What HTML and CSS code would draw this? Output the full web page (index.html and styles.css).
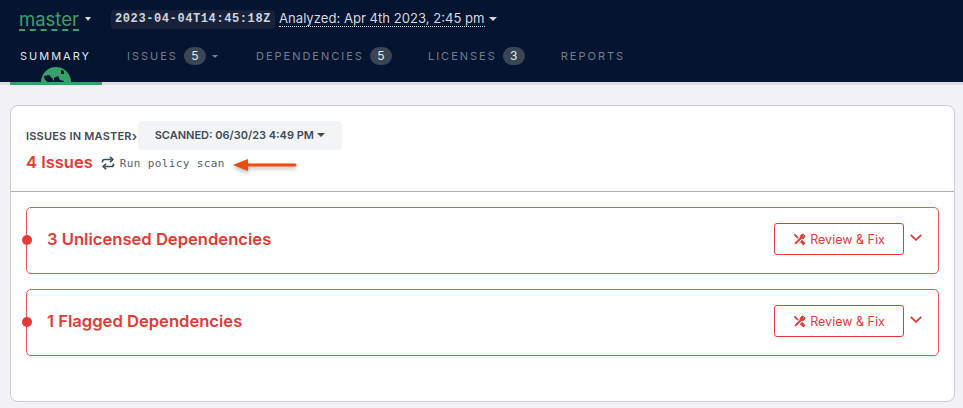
FILE: index.html
```html
<!DOCTYPE html>
<html lang="en">
<head>
    <meta charset="UTF-8">
    <title>Issues</title>
    <link rel="stylesheet" href="styles.css">
</head>
<body>
    <div class="topbar">
        <div class="topbar-row">
            <span class="branch">master</span>
            <span class="caret branch-caret"></span>
            <span class="revision">2023-04-04T14:45:18Z</span>
            <span class="analyzed">Analyzed: Apr 4th 2023, 2:45 pm</span>
            <span class="caret"></span>
        </div>
        <div class="tabs">
            <div class="tab active">
                SUMMARY
                <svg class="globe" width="30" height="30" viewBox="0 0 30 30">
                    <circle cx="15" cy="15" r="15" fill="#38a169"/>
                    <path d="M3 9l5-1 3 3 2 3-1 2-4 0-4-3zM13 11l4-2 2 4 4 1-1 3-6 1-3-3zM20 3l3 1 0 3-3 0z" fill="#041431"/>
                </svg>
            </div>
            <div class="tab">ISSUES <span class="count">5</span><span class="caret dim"></span></div>
            <div class="tab">DEPENDENCIES <span class="count">5</span></div>
            <div class="tab">LICENSES <span class="count">3</span></div>
            <div class="tab">REPORTS</div>
        </div>
    </div>

    <div class="main">
        <div class="card">
            <div class="card-head">
                <div class="crumbs">
                    <span class="crumb">ISSUES IN MASTER</span>
                    <span class="crumb-sep">&#8250;</span>
                    <span class="scan-select">SCANNED: 06/30/23 4:49 PM <span class="caret dark"></span></span>
                </div>
                <div class="summary-row">
                    <span class="issue-total">4 Issues</span>
                    <svg class="refresh" width="14" height="14" viewBox="0 0 14 14" fill="none" stroke="#3f4a5a" stroke-width="1.700">
                        <path d="M1.500 6.500V5.500a2 2 0 0 1 2-2h7"/>
                        <path d="M9 .8l2.800 2.700L9 6.200"/>
                        <path d="M12.500 7.500v1a2 2 0 0 1-2 2h-7"/>
                        <path d="M5 7.800l-2.800 2.700L5 13.200"/>
                    </svg>
                    <span class="run-scan">Run policy scan</span>
                    <svg class="arrow" width="64" height="14" viewBox="0 0 64 14">
                        <path d="M0 7l15-6v4.500l47 0a1.500 1.500 0 0 1 0 3l-47 0v4.500z" fill="#f04a0e"/>
                    </svg>
                </div>
            </div>
            <div class="issue-list">
                <div class="issue">
                    <span class="issue-dot"></span>
                    <span class="issue-title">3 Unlicensed Dependencies</span>
                    <button class="fix-btn">
                        <svg width="13" height="13" viewBox="0 0 14 14" fill="none" stroke="#e53935">
                            <path d="M1.500 1.500l6 6" stroke-width="1.800"/>
                            <path d="M8.500 8.500l3.800 3.800" stroke-width="3.200"/>
                            <path d="M2.500 11.500l6.500-6.500" stroke="#fff" stroke-width="4"/>
                            <path d="M2.300 11.700l6.500-6.500" stroke-width="2.200"/>
                            <path d="M8.200 5.800a3 3 0 0 1 3.600-4.400L10 3.200l.800 0.000 0 .800 1.800-1.800a3 3 0 0 1-4.400 3.600z" fill="#e53935" stroke-width="1"/>
                        </svg>
                        Review &amp; Fix
                    </button>
                    <svg class="chevron" width="12" height="7" viewBox="0 0 12 7" fill="none" stroke="#e53935" stroke-width="1.800"><path d="M.7 .8L6 5.800 11.300 .8"/></svg>
                </div>
                <div class="issue">
                    <span class="issue-dot"></span>
                    <span class="issue-title">1 Flagged Dependencies</span>
                    <button class="fix-btn">
                        <svg width="13" height="13" viewBox="0 0 14 14" fill="none" stroke="#e53935">
                            <path d="M1.500 1.500l6 6" stroke-width="1.800"/>
                            <path d="M8.500 8.500l3.800 3.800" stroke-width="3.200"/>
                            <path d="M2.500 11.500l6.500-6.500" stroke="#fff" stroke-width="4"/>
                            <path d="M2.300 11.700l6.500-6.500" stroke-width="2.200"/>
                            <path d="M8.200 5.800a3 3 0 0 1 3.600-4.400L10 3.200l.800 0.000 0 .800 1.800-1.800a3 3 0 0 1-4.400 3.600z" fill="#e53935" stroke-width="1"/>
                        </svg>
                        Review &amp; Fix
                    </button>
                    <svg class="chevron" width="12" height="7" viewBox="0 0 12 7" fill="none" stroke="#e53935" stroke-width="1.800"><path d="M.7 .8L6 5.800 11.300 .8"/></svg>
                </div>
            </div>
        </div>
    </div>
</body>
</html>
```

FILE: styles.css
```css
* {
    margin: 0;
    padding: 0;
    box-sizing: border-box;
}
html, body {
    height: 100%;
    overflow: hidden;
}
body {
    background: #f2f2f4;
    font-family: Inter, Arial, sans-serif;
    color: #3f4a5a;
}
.topbar {
    height: 82px;
    background: #041431;
    padding: 0 19px;
}
.topbar-row {
    display: flex;
    align-items: center;
    height: 38px;
}
.branch {
    color: #38a169;
    font-size: 18.500px;
    line-height: 19px;
    border-bottom: 2px dashed #38a169;
    margin-top: 2px;
}
.caret {
    display: inline-block;
    width: 0;
    height: 0;
    border-left: 4px solid transparent;
    border-right: 4px solid transparent;
    border-top: 4px solid #d5d9e0;
    margin-left: 4px;
}
.caret.dim {
    border-top-color: #77808f;
    border-left-width: 3px;
    border-right-width: 3px;
    border-top-width: 3px;
    margin-left: 6px;
    margin-right: 2px;
}
.caret.dark {
    border-top-color: #3f4a5a;
    margin-left: 0;
    vertical-align: 2px;
}
.branch-caret {
    border-left-width: 3px;
    border-right-width: 3px;
    margin-left: 6px;
    margin-right: 20px;
}
.revision {
    font-family: "Liberation Mono", monospace;
    font-size: 12px;
    font-weight: bold;
    color: #cfd4dc;
    background: #16223b;
    border-radius: 4px;
    padding: 3px 4px;
    margin-right: 4px;
    line-height: 13px;
    letter-spacing: 0.600px;
}
.analyzed {
    color: #d5d9e0;
    font-size: 13.100px;
    line-height: 15px;
    border-bottom: 1px dotted #d5d9e0;
}
.tabs {
    display: flex;
    height: 44px;
    padding-left: 1px;
}
.tab {
    position: relative;
    color: #757e8c;
    font-size: 11px;
    letter-spacing: 2px;
    display: flex;
    align-items: center;
    height: 36px;
    margin-right: 36px;
}
.tab.active {
    color: #e2e5ea;
}
.tab.active::after {
    content: "";
    position: absolute;
    left: -10px;
    right: -11px;
    top: 44px;
    height: 3px;
    background: #38a169;
}
.globe {
    position: absolute;
    left: 21px;
    top: 29px;
    clip-path: inset(0 0 15px 0);
}
.count {
    display: inline-block;
    background: #3a4556;
    color: #e4e7ec;
    border-radius: 9px;
    width: 22px;
    height: 18px;
    line-height: 18px;
    text-align: center;
    letter-spacing: 0;
    font-size: 12px;
    margin-left: 6px;
}
.main {
    padding: 20px 8px 0 10px;
    border-top: 3px solid #dedfe1;
}
.card {
    height: 297px;
    background: #fff;
    border: 1px solid #c8cdd8;
    border-radius: 8px;
}
.card-head {
    height: 86px;
    padding: 15px 15px 0;
    border-bottom: 1px solid #a9aeb9;
}
.crumbs {
    display: flex;
    align-items: center;
    height: 29px;
}
.crumb {
    font-size: 11px;
    font-weight: 600;
    color: #3f4a5a;
    letter-spacing: 0.200px;
}
.crumb-sep {
    font-size: 13px;
    font-weight: 600;
    width: 6px;
}
.scan-select {
    font-size: 11px;
    font-weight: 600;
    background: #f3f4f6;
    border-radius: 4px;
    height: 29px;
    line-height: 29px;
    padding: 0 17px;
}
.summary-row {
    display: flex;
    align-items: center;
    height: 24px;
}
.issue-total {
    color: #e53935;
    font-size: 16.500px;
    font-weight: 600;
    margin-right: 8px;
}
.refresh {
    margin-top: 2px;
    margin-right: 5px;
}
.run-scan {
    font-family: "DejaVu Sans Mono", monospace;
    font-size: 11px;
    letter-spacing: 0.380px;
    color: #556070;
    margin-top: 2px;
    margin-right: 8px;
}
.arrow {
    margin-top: 5px;
    filter: drop-shadow(0 2px 2px rgba(0, 0, 0, 0.3));
}
.issue-list {
    padding: 15px;
    display: flex;
    flex-direction: column;
    gap: 15px;
}
.issue {
    position: relative;
    display: flex;
    align-items: center;
    height: 67px;
    border: 1px solid #e5575a;
    border-radius: 5px;
    padding: 0 16px 0 20px;
    box-shadow: 0 1px 2px rgba(0, 0, 0, 0.06);
}
.issue-dot {
    position: absolute;
    left: -5px;
    top: 27px;
    width: 10px;
    height: 10px;
    background: #e53935;
    border-radius: 50%;
}
.issue-title {
    flex: 1;
    color: #e53935;
    font-size: 16.600px;
    font-weight: 600;
    margin-bottom: 3px;
}
.fix-btn {
    display: flex;
    align-items: center;
    justify-content: center;
    gap: 4px;
    width: 130px;
    height: 32px;
    background: #fff;
    border: 1px solid #e53935;
    border-radius: 3px;
    color: #e53935;
    font-family: Inter, Arial, sans-serif;
    font-size: 12.500px;
    margin-right: 6px;
    margin-bottom: 3px;
}
.chevron {
    display: block;
    margin-bottom: 6px;
}
```
